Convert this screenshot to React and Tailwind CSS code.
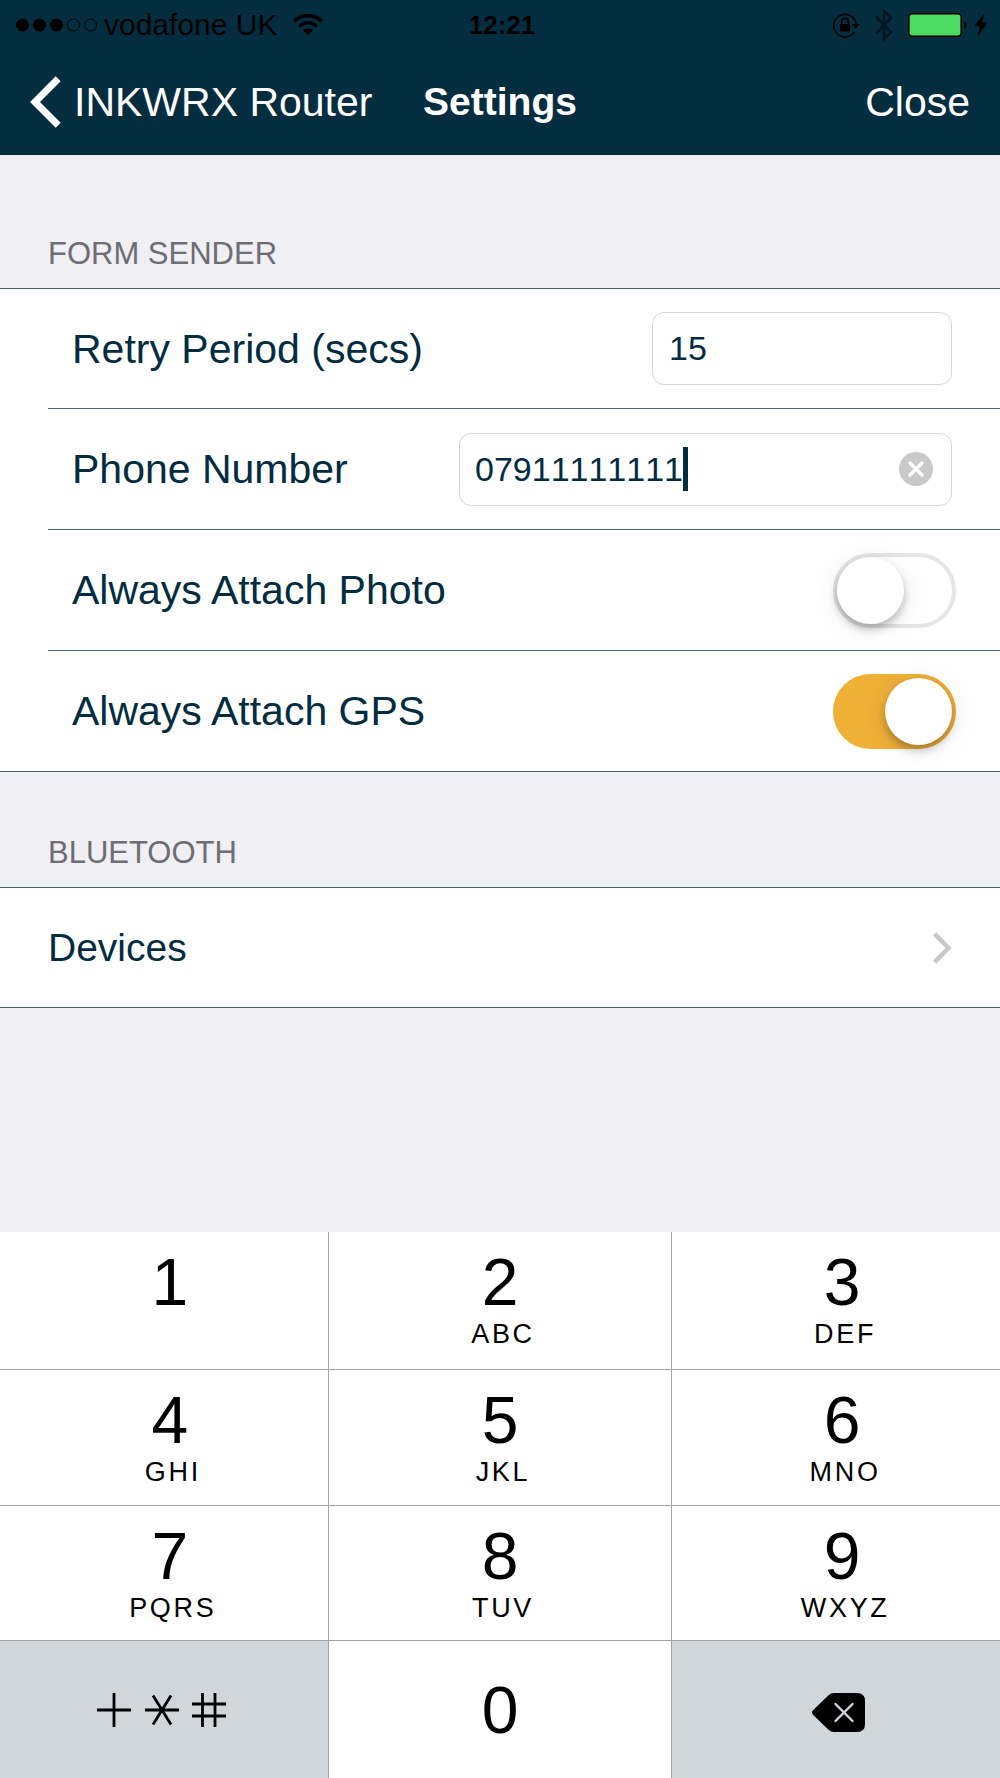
import { useState } from 'react';

const KEYS = [
  { digit: '1', letters: '' },
  { digit: '2', letters: 'ABC' },
  { digit: '3', letters: 'DEF' },
  { digit: '4', letters: 'GHI' },
  { digit: '5', letters: 'JKL' },
  { digit: '6', letters: 'MNO' },
  { digit: '7', letters: 'PQRS' },
  { digit: '8', letters: 'TUV' },
  { digit: '9', letters: 'WXYZ' },
];

function StatusBar() {
  return (
    <div className="grid h-12 grid-cols-[1fr_auto_1fr] items-center pl-4 pr-3 pt-0.5 text-black">
      <div className="flex items-center">
        <svg width="82" height="16" viewBox="0 0 82 16" className="mr-1.5">
          <circle cx="6.5" cy="8" r="6.5" />
          <circle cx="23.5" cy="8" r="6.5" />
          <circle cx="40.5" cy="8" r="6.5" />
          <circle cx="57.5" cy="8" r="6" fill="none" stroke="currentColor" />
          <circle cx="74.5" cy="8" r="6" fill="none" stroke="currentColor" />
        </svg>
        <span className="text-[30px] leading-9">vodafone UK</span>
        <svg width="30" height="22" viewBox="0 0 30 22" className="ml-4" fill="none" stroke="currentColor" strokeWidth="3.6">
          <path d="M1.2 7.3a19.5 19.5 0 0 1 27.6 0" />
          <path d="M6.2 12.4a12.4 12.4 0 0 1 17.6 0" />
          <path d="M15 21.5l-5-5.2a7.2 7.2 0 0 1 10 0z" fill="currentColor" stroke="none" />
        </svg>
      </div>
      <span className="text-[26px] font-bold leading-9">12:21</span>
      <div className="flex items-center justify-end">
        {/* Rotation lock */}
        <svg width="28" height="26" viewBox="0 0 28 26" className="mr-[15px]">
          <path d="M22.6 19.8A11.3 11.3 0 1 1 24.2 12" fill="none" stroke="currentColor" strokeWidth="1.6" />
          <path d="M20.3 12h7.4L24 16.4z" />
          <rect x="8" y="12" width="10" height="7.5" rx="1" />
          <path d="M9.8 12.5V9.6a3.2 3.2 0 0 1 6.4 0v2.9" fill="none" stroke="currentColor" strokeWidth="1.8" />
        </svg>
        {/* Bluetooth */}
        <svg width="18" height="34" viewBox="0 0 18 34" className="mr-[15px] opacity-50" fill="none" stroke="currentColor" strokeWidth="2.6">
          <path d="M.8 8.2 16 24.3 9 31V3l7 6.7L.8 25.8" />
        </svg>
        <svg width="60" height="24" viewBox="0 0 60 24" className="mr-1.5">
          <rect x=".8" y=".8" width="52.4" height="22.4" rx="3.5" fill="#4cd964" stroke="currentColor" strokeWidth="1.6" />
          <path d="M56 8.2c3.6.6 3.6 7 0 7.6z" />
        </svg>
        <svg width="14" height="24" viewBox="0 0 13 23">
          <path d="M9.8 0 0 12.8h5.4L3 23 13 9.2H7.4z" />
        </svg>
      </div>
    </div>
  );
}

function NavBar() {
  return (
    <nav className="grid h-[107px] grid-cols-[1fr_auto_1fr] items-center px-[30px] text-[41px] leading-[48px] text-white">
      <a href="#router" className="flex items-center gap-[13px] whitespace-nowrap">
        <svg width="31" height="52" viewBox="0 0 31 52" fill="none" stroke="currentColor" strokeWidth="7">
          <path d="M28.2 2.8 5 26l23.2 23.2" />
        </svg>
        INKWRX Router
      </a>
      <h1 className="text-[39px] font-bold">Settings</h1>
      <button type="button" className="justify-self-end">Close</button>
    </nav>
  );
}

function Switch({ id, checked, onChange }) {
  return (
    <input
      id={id}
      type="checkbox"
      role="switch"
      checked={checked}
      onChange={(e) => onChange(e.target.checked)}
      className="mr-11 h-[75px] w-[123px] appearance-none rounded-full border-4 border-[#e5e5e5] bg-white before:block before:size-[67px] before:rounded-full before:bg-white before:shadow-[0_5px_8px_rgba(0,0,0,0.25),0_4px_28px_rgba(0,0,0,0.08)] checked:border-[#efb038] checked:bg-[#efb038] checked:before:ml-12"
    />
  );
}

function Row({ id, label, children }) {
  return (
    <div className="flex h-[121px] items-center justify-between border-t border-[#3f6474] pl-6 first:h-[119px] first:border-t-0">
      <label htmlFor={id} className="text-[41px] leading-[48px]">{label}</label>
      {children}
    </div>
  );
}

function Keypad({ onDigit, onDelete }) {
  const keyClass = 'flex flex-col items-center bg-white pt-4';
  return (
    <div className="mt-auto grid grid-cols-[328fr_343fr_328fr] grid-rows-[137px_135px_134px_137px] gap-px bg-[#a3a3a3] text-black">
      {KEYS.map(({ digit, letters }, i) => (
        <button
          key={digit}
          type="button"
          onClick={() => onDigit(digit)}
          className={i % 3 === 1 ? keyClass : `${keyClass} pl-3`}
        >
          <span className="text-[66px] leading-[68px]">{digit}</span>
          <span className="pl-1.5 text-[27px] leading-9 tracking-widest">{letters}</span>
        </button>
      ))}
      <button type="button" aria-label="Symbols" className="flex items-center justify-center bg-[#d1d5dc] pr-1">
        <svg width="130" height="36" viewBox="0 0 130 36" fill="none" stroke="currentColor" strokeWidth="2.8">
          <path d="M0 18h34M17 1v34" />
          <path d="M48 18h34M56 3.5l18 29M74 3.5l-18 29" />
          <path d="M95 12h34M95 24h34M105.5 1v34M118 1v34" />
        </svg>
      </button>
      <button type="button" onClick={() => onDigit('0')} className="flex items-center justify-center bg-white text-[66px] leading-[68px]">
        0
      </button>
      <button type="button" aria-label="Delete" onClick={onDelete} className="flex items-center justify-center bg-[#d1d5dc] pl-1 pt-1.5">
        <svg width="53" height="39" viewBox="0 0 53 39">
          <path d="M1 17.3 16.5 2.2Q18.8 0 22 0h23q8 0 8 8v23q0 8-8 8H22q-3.2 0-5.5-2.2L1 21.7q-2-2.2 0-4.4z" />
          <path d="M23.5 11l17 17M40.5 11l-17 17" stroke="#d1d5dc" strokeWidth="2.4" strokeLinecap="round" />
        </svg>
      </button>
    </div>
  );
}

export default function App() {
  const [retryPeriod, setRetryPeriod] = useState('15');
  const [phone, setPhone] = useState('07911111111');
  const [attachPhoto, setAttachPhoto] = useState(false);
  const [attachGps, setAttachGps] = useState(true);

  return (
    <div className="flex min-h-screen flex-col bg-[#efeff4] font-['Liberation_Sans',Arial,sans-serif] text-[#022c40]">
      <header className="bg-[#042d3f]">
        <StatusBar />
        <NavBar />
      </header>

      <main>
        <h2 className="px-12 pb-4 pt-[81px] text-[31px] leading-9 text-[#6d6d72]">FORM SENDER</h2>
        <section className="border-y border-[#3f6474] bg-white pl-12">
          <Row id="retry" label="Retry Period (secs)">
            <input
              id="retry"
              type="text"
              inputMode="numeric"
              value={retryPeriod}
              onChange={(e) => setRetryPeriod(e.target.value)}
              className="mr-12 h-[73px] w-[300px] rounded-xl border border-[#d6d6d6] px-4 text-[34px] outline-none"
            />
          </Row>
          <Row id="phone" label="Phone Number">
            <div className="mr-12 flex h-[73px] w-[493px] items-center rounded-xl border border-[#d6d6d6] pl-[15px] pr-[18px]">
              <input
                id="phone"
                type="tel"
                value={phone}
                onChange={(e) => setPhone(e.target.value)}
                className="text-[34px] outline-none [field-sizing:content] [font-kerning:none]"
              />
              {/* Text cursor */}
              <span className="h-11 w-[5px] bg-[#022c40]" />
              <button type="button" aria-label="Clear" onClick={() => setPhone('')} className="ml-auto">
                <svg width="34" height="34" viewBox="0 0 34 34">
                  <circle cx="17" cy="17" r="17" fill="#c9c9c9" />
                  <path d="M11 11l12 12M23 11 11 23" stroke="#fff" strokeWidth="3.4" strokeLinecap="round" />
                </svg>
              </button>
            </div>
          </Row>
          <Row id="photo" label="Always Attach Photo">
            <Switch id="photo" checked={attachPhoto} onChange={setAttachPhoto} />
          </Row>
          <Row id="gps" label="Always Attach GPS">
            <Switch id="gps" checked={attachGps} onChange={setAttachGps} />
          </Row>
        </section>

        <h2 className="px-12 pb-4 pt-[63px] text-[31px] leading-9 text-[#6d6d72]">BLUETOOTH</h2>
        <section className="border-y border-[#3f6474] bg-white">
          <a href="#devices" className="flex h-[119px] items-center justify-between px-12 text-[39px] leading-[48px]">
            Devices
            <svg width="20" height="32" viewBox="0 0 20 32" fill="none" stroke="#c7c7cc" strokeWidth="4.5">
              <path d="M2.5 1.8 16.5 16 2.5 30.2" />
            </svg>
          </a>
        </section>
      </main>

      <Keypad
        onDigit={(digit) => setPhone(phone + digit)}
        onDelete={() => setPhone(phone.slice(0, -1))}
      />
    </div>
  );
}
